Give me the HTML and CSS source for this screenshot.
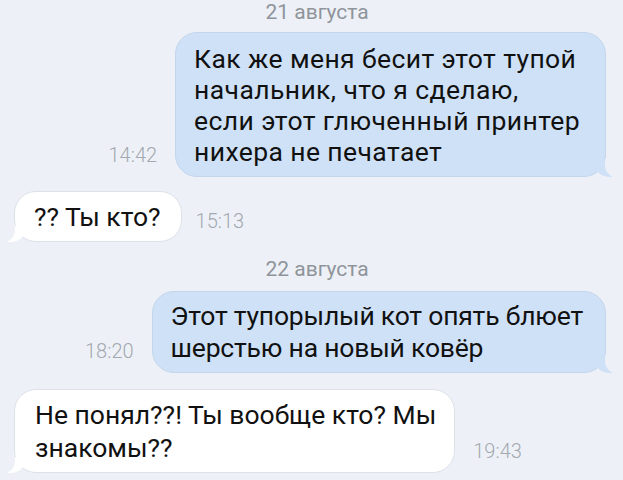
FILE: index.html
```html
<!DOCTYPE html>
<html lang="ru">
<head>
<meta charset="utf-8">
<title>Чат</title>
<link rel="stylesheet" href="styles.css">
</head>
<body>
<div class="chat">
  <div class="date date-first">21 августа</div>
  <div class="row row-out row-1">
    <span class="time">14:42</span>
    <div class="bubble out b1">Как же меня бесит этот тупой<br>начальник, что я сделаю,<br>если этот глюченный принтер<br>нихера не печатает</div>
  </div>
  <div class="row row-in row-2">
    <div class="bubble in b2">?? Ты кто?</div>
    <span class="time time-mid">15:13</span>
  </div>
  <div class="date date-second">22 августа</div>
  <div class="row row-out row-3">
    <span class="time">18:20</span>
    <div class="bubble out b3">Этот тупорылый кот опять блюет<br>шерстью на новый ковёр</div>
  </div>
  <div class="row row-in row-4">
    <div class="bubble in b4">Не понял??! Ты вообще кто? Мы<br>знакомы??</div>
    <span class="time">19:43</span>
  </div>
</div>
</body>
</html>
```
FILE: styles.css
```css
html, body {
  margin: 0;
  padding: 0;
}
body {
  background: #edf1f7;
  font-family: Roboto, "Liberation Sans", Arial, sans-serif;
  color: #111;
  width: 623px;
  height: 480px;
  overflow: hidden;
}
.chat {
  display: flex;
  flex-direction: column;
  padding: 0 17px 0 14px;
}
.date {
  align-self: center;
  font-size: 21px;
  color: #8f949b;
  line-height: 22px;
  padding-left: 14px;
}
.date-first {
  margin-top: 1px;
}
.date-second {
  margin-top: 16px;
}
.row {
  display: flex;
  align-items: flex-end;
  gap: 18px;
}
.row-out {
  justify-content: flex-end;
}
.row-1 { margin-top: 9px; }
.row-2 { margin-top: 14px; }
.row-3 { margin-top: 11px; }
.row-4 { margin-top: 16px; }
.bubble {
  position: relative;
  font-size: 26.5px;
  line-height: 31px;
  border-radius: 22px;
  white-space: nowrap;
}
.out {
  background: #cfe1f6;
  border: 1px solid #c4d6ec;
  padding: 10px 22px 9px 18px;
}
.b1 {
  letter-spacing: 0.4px;
  padding-right: 25px;
}
.b3 {
  letter-spacing: -0.2px;
  line-height: 32px;
  padding-top: 8px;
  padding-bottom: 8px;
}
.in {
  background: #ffffff;
  border: 1px solid #dde2e9;
  padding: 9px 20px 9px 19px;
}
.b4 {
  line-height: 33px;
  padding: 8px 18px 8px 20px;
}
.out::before {
  content: "";
  position: absolute;
  right: -7px;
  bottom: -1px;
  width: 18px;
  height: 16px;
  background: #cfe1f6;
  border-bottom-left-radius: 16px 14px;
}
.out::after {
  content: "";
  position: absolute;
  right: -13px;
  bottom: -1px;
  width: 13px;
  height: 18px;
  background: #edf1f7;
  border-bottom-left-radius: 11px 12px;
}
.in::before {
  content: "";
  position: absolute;
  left: -7px;
  bottom: -1px;
  width: 18px;
  height: 16px;
  background: #ffffff;
  border-bottom-right-radius: 16px 14px;
}
.in::after {
  content: "";
  position: absolute;
  left: -13px;
  bottom: -1px;
  width: 13px;
  height: 18px;
  background: #edf1f7;
  border-bottom-right-radius: 11px 12px;
}
.time {
  font-size: 20px;
  font-weight: 300;
  color: #a3a8af;
  line-height: 22px;
  margin-bottom: 11px;
}
.time-mid {
  align-self: center;
  margin-bottom: 0;
  margin-top: 8px;
  margin-left: -4px;
}
```
